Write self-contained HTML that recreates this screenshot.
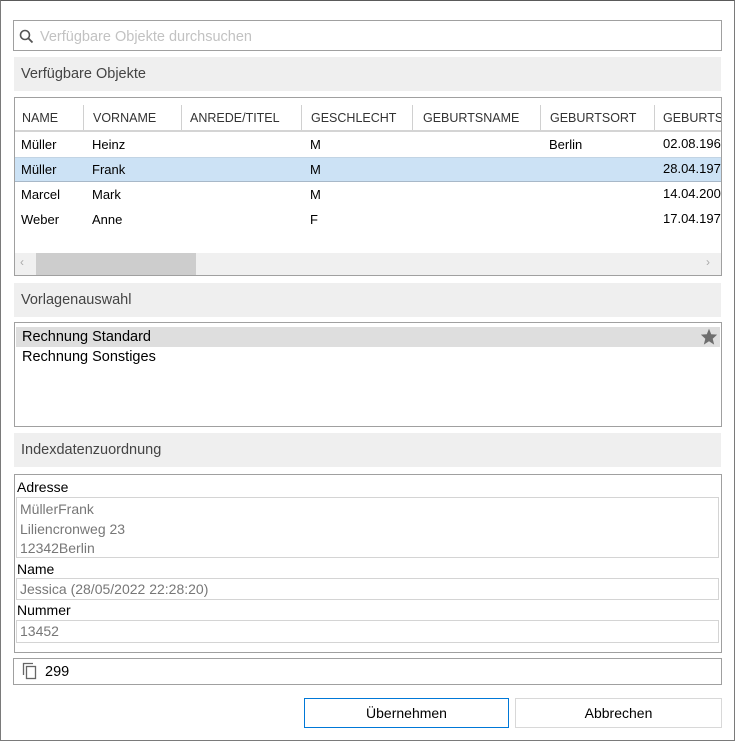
<!DOCTYPE html>
<html><head><meta charset="utf-8"><style>
*{margin:0;padding:0;box-sizing:border-box}
body{width:735px;height:741px;background:#fff;font-family:"Liberation Sans",sans-serif;position:relative;overflow:hidden;color:#000}
.a{position:absolute}
.frame{left:0;top:0;width:735px;height:741px;border:1px solid #7a7a7a;border-top-color:#5a5a5a}
.hdr{background:#efefef;left:14px;width:707px;height:34px;font-size:14.5px;color:#444;padding:9px 0 0 7px}
.t{font-size:13px;white-space:nowrap}
.th{font-size:12.5px;color:#333;white-space:nowrap}
.sep{width:1px;height:25px;background:#d0d0d0;top:105px}
.g{color:#777;font-size:14px}
</style></head><body>
<div class="a frame"></div>
<div class="a" style="left:13px;top:20px;width:709px;height:31px;border:1px solid #a0a0a0"></div>
<svg class="a" style="left:19px;top:29px" width="15" height="15" viewBox="0 0 15 15"><circle cx="6" cy="6" r="4.5" fill="none" stroke="#555" stroke-width="1.6"/><line x1="9.3" y1="9.3" x2="13.5" y2="13.5" stroke="#555" stroke-width="1.8"/></svg>
<div class="a" style="left:40px;top:29px;font-size:14.5px;color:#c2c2c2">Verfügbare Objekte durchsuchen</div>
<div class="a hdr" style="top:57px">Verfügbare Objekte</div>
<div class="a" style="left:14px;top:97px;width:708px;height:179px;border:1px solid #a0a0a0;overflow:hidden"></div>
<div class="a" style="left:15px;top:130px;width:706px;height:2px;background:#d4d4d4"></div>
<div class="a" style="left:15px;top:157px;width:706px;height:25px;background:#cce2f5;border-top:1px solid #c2d4e4;border-bottom:1px solid #a8b8c8"></div>
<div class="a sep" style="left:83px"></div><div class="a sep" style="left:181px"></div><div class="a sep" style="left:301px"></div><div class="a sep" style="left:412px"></div><div class="a sep" style="left:540px"></div><div class="a sep" style="left:654px"></div>
<div class="a th" style="left:22px;top:111px">NAME</div>
<div class="a th" style="left:93px;top:111px">VORNAME</div>
<div class="a th" style="left:190px;top:111px">ANREDE/TITEL</div>
<div class="a th" style="left:311px;top:111px">GESCHLECHT</div>
<div class="a th" style="left:423px;top:111px">GEBURTSNAME</div>
<div class="a th" style="left:550px;top:111px">GEBURTSORT</div>
<div class="a" style="left:660px;top:104px;width:61px;height:28px;overflow:hidden"><div class="th" style="margin:7px 0 0 3px">GEBURTSDATUM</div></div>
<div class="a t" style="left:21px;top:137px">Müller</div><div class="a t" style="left:92px;top:137px">Heinz</div><div class="a t" style="left:310px;top:137px">M</div><div class="a t" style="left:549px;top:137px">Berlin</div>
<div class="a t" style="left:21px;top:162px">Müller</div><div class="a t" style="left:92px;top:162px">Frank</div><div class="a t" style="left:310px;top:162px">M</div>
<div class="a t" style="left:21px;top:187px">Marcel</div><div class="a t" style="left:92px;top:187px">Mark</div><div class="a t" style="left:310px;top:187px">M</div>
<div class="a t" style="left:21px;top:212px">Weber</div><div class="a t" style="left:92px;top:212px">Anne</div><div class="a t" style="left:310px;top:212px">F</div>
<div class="a" style="left:663px;top:131px;width:58px;height:100px;overflow:hidden;font-size:13px;line-height:25px">02.08.1965<br>28.04.1975<br>14.04.2001<br>17.04.1973</div>
<div class="a" style="left:15px;top:253px;width:706px;height:22px;background:#f0f0f0"></div>
<div class="a" style="left:36px;top:253px;width:160px;height:22px;background:#cdcdcd"></div>
<div class="a" style="left:20px;top:255px;font-size:12px;color:#aaa">&lsaquo;</div>
<div class="a" style="left:706px;top:255px;font-size:12px;color:#aaa">&rsaquo;</div>
<div class="a hdr" style="top:283px">Vorlagenauswahl</div>
<div class="a" style="left:14px;top:322px;width:708px;height:105px;border:1px solid #a0a0a0"></div>
<div class="a" style="left:16px;top:327px;width:704px;height:20px;background:#dedede"></div>
<div class="a" style="left:22px;top:329px;font-size:14.5px">Rechnung Standard</div>
<div class="a" style="left:22px;top:349px;font-size:14.5px">Rechnung Sonstiges</div>
<svg class="a" style="left:700px;top:328px" width="18" height="17" viewBox="0 0 24 23"><polygon points="12,1 15,8.5 23,9 17,14.5 19,22.5 12,18 5,22.5 7,14.5 1,9 9,8.5" fill="#6e6e6e"/></svg>
<div class="a hdr" style="top:433px">Indexdatenzuordnung</div>
<div class="a" style="left:14px;top:474px;width:708px;height:179px;border:1px solid #a0a0a0"></div>
<div class="a" style="left:17px;top:479px;font-size:14px">Adresse</div>
<div class="a" style="left:16px;top:497px;width:703px;height:61px;border:1px solid #d4d4d4"></div>
<div class="a g" style="left:20px;top:500px;line-height:19.5px">MüllerFrank<br>Liliencronweg 23<br>12342Berlin</div>
<div class="a" style="left:17px;top:561px;font-size:14px">Name</div>
<div class="a" style="left:16px;top:578px;width:703px;height:22px;border:1px solid #d4d4d4"></div>
<div class="a g" style="left:20px;top:581px">Jessica (28/05/2022 22:28:20)</div>
<div class="a" style="left:17px;top:602px;font-size:14px">Nummer</div>
<div class="a" style="left:16px;top:620px;width:703px;height:23px;border:1px solid #d4d4d4"></div>
<div class="a g" style="left:20px;top:623px">13452</div>
<div class="a" style="left:13px;top:658px;width:709px;height:27px;border:1px solid #a0a0a0"></div>
<svg class="a" style="left:22px;top:662px" width="16" height="18" viewBox="0 0 16 18"><path d="M1.5 13V1.5H11" fill="none" stroke="#666" stroke-width="1.3"/><rect x="4.5" y="4.5" width="9" height="12" fill="none" stroke="#666" stroke-width="1.3"/></svg>
<div class="a" style="left:45px;top:664px;font-size:14.5px">299</div>
<div class="a" style="left:304px;top:698px;width:205px;height:30px;border:1px solid #0078d7;background:#fff;font-size:14px;text-align:center;line-height:29px">Übernehmen</div>
<div class="a" style="left:515px;top:698px;width:207px;height:30px;border:1px solid #d8d8d8;background:#fff;font-size:14px;text-align:center;line-height:29px">Abbrechen</div>
</body></html>
